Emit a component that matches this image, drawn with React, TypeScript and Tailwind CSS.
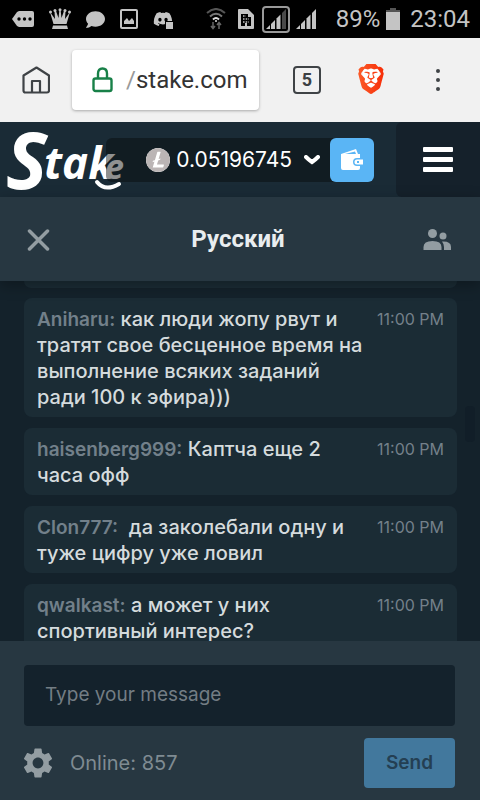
import type { ReactNode } from "react";
import { FaComment, FaDiscord } from "react-icons/fa";
import { MdSettings } from "react-icons/md";
import { SiBrave, SiLitecoin } from "react-icons/si";

type Message = { user: string; text: string; time: string };

const messages: Message[] = [
  {
    user: "Aniharu",
    text: "как люди жопу рвут и тратят свое бесценное время на выполнение всяких заданий ради 100 к эфира)))",
    time: "11:00 PM",
  },
  { user: "haisenberg999", text: "Каптча еще 2 часа офф", time: "11:00 PM" },
  {
    user: "Clon777",
    text: "\u00a0да заколебали одну и туже цифру уже ловил",
    time: "11:00 PM",
  },
  {
    user: "qwalkast",
    text: "а может у них спортивный интерес?",
    time: "11:00 PM",
  },
];

function SignalBars({ weak = false }: { weak?: boolean }) {
  return (
    <svg width="20" height="20" viewBox="0 0 20 20" fill="#c4c4c4" aria-hidden="true">
      <path d="M0 20L4 16V20Z" />
      <path d="M5 15L9 11V20H5Z" />
      <path d="M10.500 9.500L14.500 5.500V20H10.500Z" />
      <path d="M16 4L20 0V20H16Z" fill={weak ? "#4a4a4a" : "#c4c4c4"} />
    </svg>
  );
}

function StatusBar() {
  return (
    <div className="flex h-[38px] shrink-0 items-center justify-between bg-black pr-[10px] pl-3 text-[#c4c4c4]">
      <div className="flex items-center gap-[15px]">
        <svg width="22" height="18" viewBox="0 0 22 18" aria-hidden="true">
          <path d="M7 1H20Q22 1 22 3V15Q22 17 20 17H7L5 16L0 9L5 2Z" fill="#c4c4c4" />
          <circle cx="7" cy="9" r="1.700" fill="#000" />
          <circle cx="12.500" cy="9" r="1.700" fill="#000" />
          <circle cx="18" cy="9" r="1.700" fill="#000" />
        </svg>
        <svg width="22" height="22" viewBox="0 0 22 22" fill="#c4c4c4" aria-hidden="true">
          <path d="M1 4L6 11L5.500 3H7L9.500 10L10.500 1H11.500L12.500 10L15 3H16.500L16 11L21 4L17.500 16H4.500Z" />
          <circle cx="1.500" cy="4" r="1.500" />
          <circle cx="6" cy="2.500" r="1.500" />
          <circle cx="11" cy="1.800" r="1.500" />
          <circle cx="16" cy="2.500" r="1.500" />
          <circle cx="20.500" cy="4" r="1.500" />
          <path d="M4 17.500H18L19 21H3Z" />
        </svg>
        <FaComment size={19} aria-hidden="true" />
        <svg width="18" height="20" viewBox="0 0 18 20" aria-hidden="true">
          <rect x="1" y="1" width="16" height="18" rx="1" fill="none" stroke="#c4c4c4" strokeWidth="2" />
          <path d="M4 15V12L7 9L9 12L12 9L14 12V15Z" fill="#c4c4c4" />
        </svg>
        <div className="relative">
          <FaDiscord size={20} aria-hidden="true" />
          <span className="absolute right-0 bottom-0 size-2 border-t border-l border-black bg-[#c4c4c4]" />
        </div>
      </div>
      <div className="flex items-center">
        <svg width="20" height="22" viewBox="0 0 20 22" fill="none" strokeWidth="2" aria-hidden="true">
          <path d="M1 5Q10 -3 19 5" stroke="#555" />
          <path d="M4 8.500Q10 3 16 8.500" stroke="#777" />
          <path d="M7 11.500Q10 8.500 13 11.500" stroke="#ddd" />
          <circle cx="10" cy="13" r="1" fill="#ddd" />
          <path d="M7 14V20M5 18L7 20.500L9 18M13 21V15M11 17L13 14.500L15 17" stroke="#666" strokeWidth="1.500" />
        </svg>
        <svg className="ml-3" width="16" height="20" viewBox="0 0 16 20" aria-hidden="true">
          <path d="M1 0H10L16 6V19Q16 20 15 20H1Q0 20 0 19V1Q0 0 1 0Z" fill="#c4c4c4" />
          <path d="M3 17V5H10V8H13V17H9V14H7V17Z" fill="#000" />
          <path d="M5 7H8M5 10H11M5 13H11" stroke="#c4c4c4" strokeWidth="1.500" strokeDasharray="1.500 1.200" />
        </svg>
        <div className="ml-2 flex h-[27px] w-7 items-center justify-center rounded-sm border-2 border-[#999]">
          <SignalBars weak />
        </div>
        <div className="ml-[6px]">
          <SignalBars />
        </div>
        <span className="ml-5 text-2xl leading-none">89%</span>
        <svg className="ml-[6px]" width="14" height="22" viewBox="0 0 14 22" aria-hidden="true">
          <path d="M4 0H10V2H14V5H0V2H4Z" fill="#555" />
          <path d="M0 4H14V22H0Z" fill="#c4c4c4" />
        </svg>
        <span className="ml-[10px] text-2xl leading-none">23:04</span>
      </div>
    </div>
  );
}

function BrowserBar() {
  return (
    <div className="flex h-[84px] shrink-0 items-center bg-[#f1f1f1] pr-[37px] pl-[22px] text-[#3c4043]">
      <button aria-label="Home">
        <svg width="28" height="28" viewBox="0 0 28 28" fill="none" stroke="#3f4346" strokeWidth="2.200" strokeLinejoin="round">
          <path d="M1.500 9.500L14.500 1.500L27 9.500V24.500Q27 26.500 25 26.500H3.500Q1.500 26.500 1.500 24.500Z" />
          <path d="M10 26V15H18V26" />
        </svg>
      </button>
      <div className="ml-[22px] flex h-[60px] min-w-0 flex-1 items-center overflow-hidden rounded bg-white pr-3 pl-5 shadow-[0_1px_3px_rgba(0,0,0,0.3)]">
        <svg className="mr-3 shrink-0" width="22" height="26" viewBox="0 0 22 26" fill="none" stroke="#188048" strokeWidth="2.400" aria-hidden="true">
          <rect x="1.500" y="11.500" width="18" height="12.500" rx="2" />
          <path d="M6 11V6.500Q6 1.500 10.500 1.500T15 6.500V11" />
        </svg>
        <a href="https://stake.com" className="block min-w-0 overflow-hidden text-2xl whitespace-nowrap text-[#333]">
          <span className="text-[#999]">/</span>stake.com
        </a>
      </div>
      <button aria-label="Open tabs" className="ml-[34px] flex size-7 items-center justify-center rounded-sm border-2 border-[#3f4346] text-lg leading-none font-bold">
        5
      </button>
      <button aria-label="Brave shields" className="ml-[36px]">
        <svg width="28" height="32" viewBox="0 0 28 32">
          <defs>
            <linearGradient id="brave" x1="0" x2="1" y1="0" y2="0">
              <stop offset="0" stopColor="#fb5a28" />
              <stop offset="1" stopColor="#f72e08" />
            </linearGradient>
          </defs>
          <path d="M6 5H22L23 18L20 25L14 29L8 25L5 18Z" fill="#fff" />
          <SiBrave x={-1} size={30} fill="url(#brave)" />
        </svg>
      </button>
      <button aria-label="More options" className="ml-[48px] flex w-[10px] flex-col items-center gap-[5px]">
        <span className="size-1 rounded-full bg-[#3f4346]" />
        <span className="size-1 rounded-full bg-[#3f4346]" />
        <span className="size-1 rounded-full bg-[#3f4346]" />
      </button>
    </div>
  );
}

function StakeLogo() {
  return (
    <svg className="shrink-0 overflow-visible" width="116" height="64" viewBox="0 0 116 64" role="img" aria-label="Stake">
      <g fill="#fff" fontFamily="'Open Sans', sans-serif" fontStyle="italic" fontWeight="700">
        <text x="0" y="61" fontSize="78">
          S
        </text>
        <text x="38" y="51" fontSize="44">
          tak
        </text>
        <text x="99" y="51" fontSize="34">
          e
        </text>
      </g>
      <path d="M91 54Q99 64 113 56" fill="none" stroke="#fff" strokeWidth="4" strokeLinecap="round" />
    </svg>
  );
}

function SiteHeader() {
  return (
    <header className="flex h-[75px] shrink-0 items-center bg-[#1a2b36] pl-[6px]">
      <StakeLogo />
      <div className="relative -ml-4 flex h-11 min-w-0 flex-1 items-center rounded-md bg-[#060a0a]/45">
        <button className="flex min-w-0 flex-1 items-center justify-end pr-[10px] font-['Inter',sans-serif] text-[21px] text-white">
          <SiLitecoin size={24} className="mr-[6px] shrink-0 rounded-full bg-white text-[#bbb5b5]" aria-hidden="true" />
          0.05196745
          <svg className="ml-3" width="16" height="10" viewBox="0 0 16 10" fill="none" stroke="#fff" strokeWidth="4" aria-hidden="true">
            <path d="M2 2Q5 5 8 7Q11 5 14 2" strokeLinecap="round" />
          </svg>
        </button>
        <button aria-label="Wallet" className="flex h-11 w-11 shrink-0 items-center justify-center rounded-md bg-[#5ab5f5]">
          <svg width="22" height="21" viewBox="0 0 22 21" fill="#fff">
            <path d="M0 5L15 0L17 5H19V9H16Q12 9 12 13T16 17H19V19Q19 21 17 21H2Q0 21 0 19ZM4 5H15L14 2.500Z" fillRule="evenodd" />
            <path d="M16 10.500H22V15.500H16Q13.500 15.500 13.500 13T16 10.500ZM16 12V14H18V12Z" fillRule="evenodd" />
          </svg>
        </button>
      </div>
      <button aria-label="Menu" className="ml-[22px] flex h-full w-[84px] shrink-0 flex-col items-center justify-center gap-[5px] rounded-l-md bg-[#15212b]">
        <span className="h-[5px] w-[30px] rounded-[1px] bg-white" />
        <span className="h-[5px] w-[30px] rounded-[1px] bg-white" />
        <span className="h-[5px] w-[30px] rounded-[1px] bg-white" />
      </button>
    </header>
  );
}

function ChatHeader() {
  return (
    <div className="relative z-10 flex h-[84px] shrink-0 items-center justify-between bg-[#273741] pr-7 pl-[26px] shadow-[0_4px_14px_rgba(0,0,0,0.3)]">
      <button aria-label="Close chat" className="w-7">
        <svg width="24" height="24" viewBox="0 0 24 24" stroke="#939da2" strokeWidth="3.500" strokeLinecap="round">
          <path d="M3.500 4L21.500 22M21.500 4L3.500 22" />
        </svg>
      </button>
      <h1 className="text-2xl font-bold text-[#e9edef]">Русский</h1>
      <button aria-label="Members">
        <svg width="30" height="24" viewBox="0 0 30 24" fill="#939da2">
          <circle cx="10.500" cy="6.500" r="4.500" />
          <circle cx="21" cy="9" r="3.500" />
          <path d="M1.500 20Q1.500 14 10.500 14T19.500 20V23H1.500Z" />
          <path d="M20 14.500Q29 14 29 20V23H22V20Q22 17 20 14.500Z" />
        </svg>
      </button>
    </div>
  );
}

function Card({ children }: { children: ReactNode }) {
  return (
    <li className="flex items-start justify-between gap-[10px] rounded-lg bg-[#1b2c35] px-[13px] pt-2 pb-[7px]">
      {children}
    </li>
  );
}

function ChatMessages() {
  return (
    <div className="relative min-h-0 flex-1 overflow-hidden bg-[#14222b]">
      <ul className="flex flex-col gap-[11px] pr-[23px] pl-6 font-['Inter',sans-serif]">
        <li className="-mb-px h-[7px] rounded-b-lg bg-[#1b2c35]" />
        {messages.map((message) => (
          <Card key={message.user}>
            <p className="min-w-0 text-xl leading-[26px] font-medium text-[#d5dbdd]">
              <span className="text-[19px] leading-5 font-semibold text-[#72808a]">{`${message.user}:`}</span> {message.text}
            </p>
            <time className="shrink-0 text-base leading-[26px] text-[#74808a]">{message.time}</time>
          </Card>
        ))}
      </ul>
      <div className="absolute top-[125px] right-[5px] h-9 w-[10px] rounded-sm bg-[#111e28]" />
    </div>
  );
}

function ChatFooter() {
  return (
    <form
      className="shrink-0 bg-[#273741] pt-6 pr-[25px] pb-3 pl-6 font-['Inter',sans-serif]"
      onSubmit={(event) => event.preventDefault()}
    >
      <input
        type="text"
        aria-label="Type your message"
        placeholder="Type your message"
        className="block h-[61px] w-full rounded bg-[#14222c] px-[21px] pb-[2px] text-[19px] text-[#dde2e3] placeholder:text-[#737d84]"
      />
      <div className="mt-3 flex items-center">
        <button type="button" aria-label="Chat settings" className="text-[#939da2]">
          <MdSettings size={36} className="-ml-1" />
        </button>
        <span className="ml-[14px] text-xl text-[#7f8b92]">Online: 857</span>
        <button type="submit" className="ml-auto h-[50px] w-[91px] rounded bg-[#42789d] text-[19px] font-semibold text-[#243f53]">
          Send
        </button>
      </div>
    </form>
  );
}

export default function App() {
  return (
    <div className="flex h-screen flex-col overflow-hidden bg-[#14222b] font-['Roboto',sans-serif]">
      <StatusBar />
      <BrowserBar />
      <SiteHeader />
      <ChatHeader />
      <ChatMessages />
      <ChatFooter />
    </div>
  );
}
